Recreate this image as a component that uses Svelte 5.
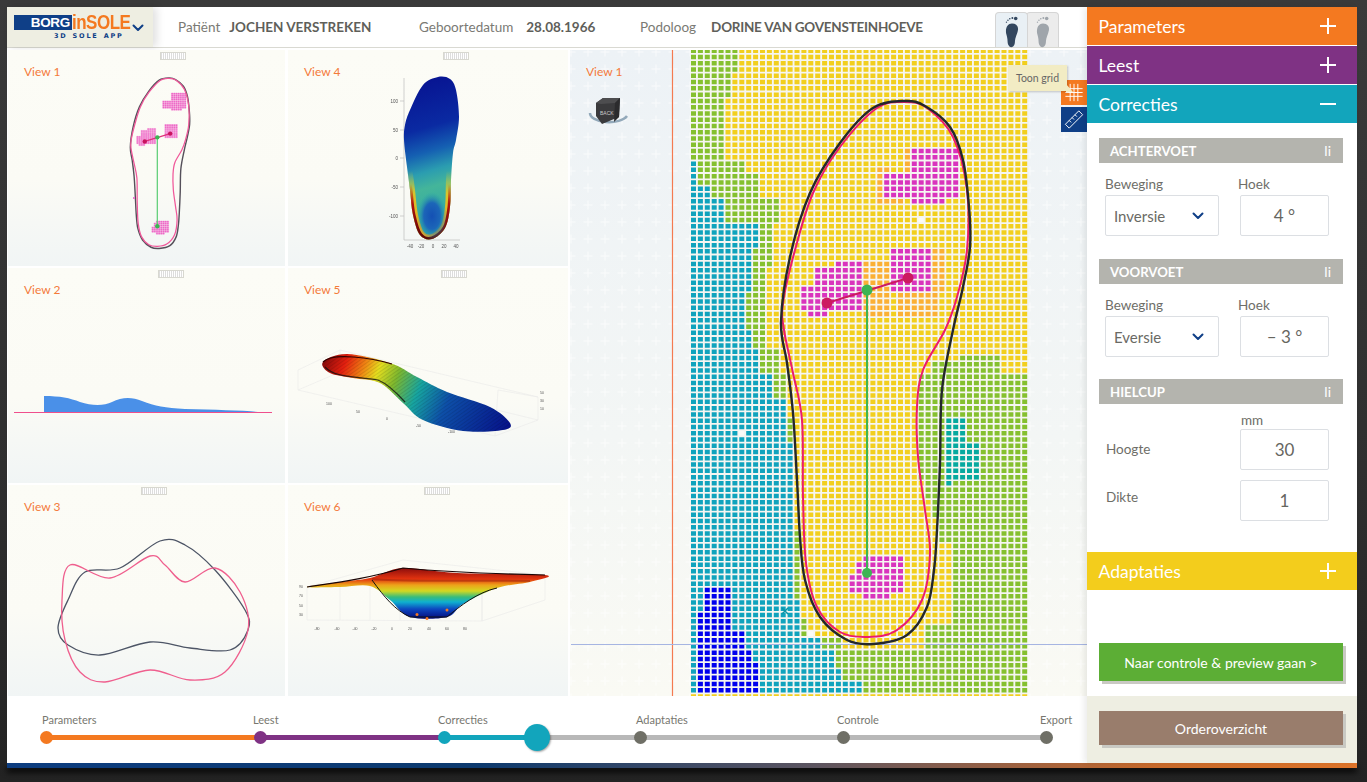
<script>
	const COLORS = {
		yellow: '#f2cf1e',
		green: '#85c02f',
		teal: '#10a3bd',
		sea: '#06a99f',
		blue: '#0000ee',
		pink: '#d934bd',
		orange: '#fbb034',
		white: '#fbfbf8'
	};

	// rectangles in page coordinates, later ones win
	const AREAS = [
		['green', 691, 50, 737, 75], ['green', 691, 75, 731, 95], ['green', 691, 95, 725, 163],
		['green', 691, 163, 745, 175], ['green', 691, 175, 758, 195], ['green', 691, 195, 778, 225],
		['green', 691, 225, 771, 270], ['green', 691, 270, 764, 350], ['green', 691, 350, 778, 375],
		['green', 691, 375, 787, 420], ['green', 691, 420, 793, 480], ['green', 691, 530, 800, 620],
		['green', 691, 620, 810, 640], ['green', 691, 640, 840, 696],
		['green', 958, 353, 998, 362], ['green', 930, 362, 998, 372], ['green', 920, 372, 1030, 480],
		['green', 925, 480, 1030, 500], ['green', 930, 500, 1030, 520], ['green', 940, 520, 1030, 540],
		['green', 950, 540, 1030, 625], ['green', 923, 625, 1030, 650], ['green', 840, 650, 1030, 696],
		['teal', 691, 163, 696, 183], ['teal', 691, 183, 711, 195], ['teal', 691, 195, 724, 220],
		['teal', 691, 220, 758, 250], ['teal', 691, 250, 752, 290], ['teal', 691, 290, 745, 330],
		['teal', 691, 330, 752, 350],
		['teal', 691, 350, 759, 375], ['teal', 691, 375, 771, 400], ['teal', 691, 400, 787, 440],
		['teal', 691, 440, 792, 600], ['teal', 691, 600, 798, 640], ['teal', 691, 640, 820, 652],
		['teal', 691, 652, 832, 670], ['teal', 691, 670, 842, 682], ['teal', 691, 682, 860, 696],
		['sea', 943, 417, 963, 445], ['sea', 943, 445, 977, 478], ['sea', 943, 478, 950, 486],
		['blue', 705, 588, 730, 610], ['blue', 698, 610, 730, 630], ['blue', 698, 630, 743, 650],
		['blue', 698, 650, 750, 665], ['blue', 698, 665, 758, 696],
		['orange', 876, 165, 890, 206], ['orange', 903, 150, 910, 170], ['orange', 876, 200, 905, 206],
		['orange', 862, 258, 890, 320], ['orange', 900, 295, 936, 320], ['orange', 930, 246, 942, 295],
		['pink', 910, 150, 958, 173], ['pink', 883, 173, 958, 195], ['pink', 910, 195, 958, 200],
		['pink', 910, 200, 943, 206],
		['pink', 890, 246, 930, 258], ['pink', 890, 258, 935, 280], ['pink', 890, 280, 930, 295],
		['pink', 835, 258, 862, 270], ['pink', 815, 270, 862, 284], ['pink', 801, 284, 868, 295],
		['pink', 801, 295, 860, 310], ['pink', 808, 310, 826, 320],
		['pink', 862, 557, 902, 563], ['pink', 855, 563, 902, 575], ['pink', 848, 575, 902, 590],
		['pink', 862, 590, 888, 600],
		['white', 917, 217, 924, 223], ['white', 739, 428, 746, 434], ['white', 808, 632, 816, 640]
	];

	function heatPaths() {
		const out = {};
		for (const key in COLORS) out[key] = '';
		for (let r = 0; r < 104; r++) {
			for (let c = 0; c < 49; c++) {
				const x = 691 + c * 6.9;
				const y = 48.5 + r * 6.27;
				let key = 'yellow';
				for (const [name, x0, y0, x1, y1] of AREAS) {
					if (x + 2.5 >= x0 && x + 2.5 < x1 && y + 2.2 >= y0 && y + 2.2 < y1) key = name;
				}
				out[key] += `M${x.toFixed(1)} ${y.toFixed(1)}h5v4.5h-5z`;
			}
		}
		return out;
	}

	const heat = heatPaths();
	const heatKeys = Object.keys(COLORS);

	// closed catmull-rom curve through points
	function smooth(pts) {
		const n = pts.length;
		let d = `M${pts[0][0]} ${pts[0][1]}`;
		for (let i = 0; i < n; i++) {
			const p0 = pts[(i - 1 + n) % n];
			const p1 = pts[i];
			const p2 = pts[(i + 1) % n];
			const p3 = pts[(i + 2) % n];
			const c1 = [p1[0] + (p2[0] - p0[0]) / 6, p1[1] + (p2[1] - p0[1]) / 6];
			const c2 = [p2[0] - (p3[0] - p1[0]) / 6, p2[1] - (p3[1] - p1[1]) / 6];
			d += `C${c1[0].toFixed(1)} ${c1[1].toFixed(1)} ${c2[0].toFixed(1)} ${c2[1].toFixed(1)} ${p2[0]} ${p2[1]}`;
		}
		return d + 'Z';
	}

	const soleBlack = smooth([
		[905, 101], [925, 106], [950, 127], [963, 160], [969, 207], [970, 247], [963, 287], [953, 330],
		[942, 390], [940, 463], [937, 530], [934, 570], [927, 607], [907, 635], [873, 644], [847, 640],
		[820, 617], [805, 580], [800, 537], [797, 480], [793, 413], [787, 363], [781, 322], [790, 257],
		[810, 193], [840, 143], [873, 108]
	]);
	const solePink = smooth([
		[905, 102], [927, 108], [953, 137], [967, 190], [967, 250], [957, 297], [945, 330], [923, 370],
		[917, 407], [918, 457], [925, 510], [930, 553], [922, 600], [897, 630], [868, 637], [840, 632],
		[817, 607], [806, 563], [803, 497], [802, 420], [793, 373], [784, 330], [783, 303], [795, 250],
		[813, 193], [840, 147], [877, 108]
	]);
	const soleTop = smooth([
		[438, 77], [450, 79], [456, 90], [459, 117], [456, 140], [453, 153], [451, 180], [450, 207],
		[445, 228], [432, 239], [420, 235], [413, 215], [410, 190], [407, 167], [404, 140], [405, 125],
		[410, 110], [423, 85]
	]);
	const side3d = smooth([
		[323, 362], [347, 354], [390, 363], [417, 377], [447, 392], [490, 407], [510, 423], [503, 430],
		[463, 431], [423, 420], [403, 403], [380, 383], [353, 378], [330, 373]
	]);
	const front3d = smooth([
		[307, 587], [340, 582], [370, 578], [403, 568], [457, 573], [545, 575], [530, 582], [497, 588],
		[463, 604], [447, 617], [410, 617], [390, 600], [370, 586], [340, 587]
	]);
	const rimDark = smooth([
		[58, 628], [68, 600], [85, 572], [120, 568], [160, 541], [185, 545], [215, 570], [245, 610],
		[248, 630], [230, 650], [190, 648], [150, 642], [100, 655], [68, 645]
	]);
	const rimPink = smooth([
		[70, 565], [110, 578], [150, 556], [165, 565], [185, 582], [215, 568], [240, 592], [248, 630],
		[225, 672], [190, 680], [150, 670], [105, 682], [80, 672], [65, 640], [62, 600]
	]);

	const accordions = { parameters: '#f47920', leest: '#7f3284', correcties: '#12a5bc', adaptaties: '#f3cd1c' };

	const steps = [
		{ label: 'Parameters', dot: '#f47920', line: '#f47920', width: 214, shift: -4 },
		{ label: 'Leest', dot: '#7f3284', line: '#7f3284', width: 184, shift: -7 },
		{ label: 'Correcties', dot: '#12a5bc', line: 'linear-gradient(90deg,#12a5bc 47%,#b8b8b8 47%)', width: 196, shift: -6 },
		{ label: 'Adaptaties', dot: '#6f6f66', line: '#b8b8b8', width: 203, shift: -4 },
		{ label: 'Controle', dot: '#6f6f66', line: '#b8b8b8', width: 203, shift: -6 },
		{ label: 'Export', dot: '#6f6f66', line: 'none', width: 0, shift: -6 }
	];

	const handles = [160, 443, 158, 441, 141, 424];
	const ticksY = [['100', 101], ['50', 130], ['0', 158], ['-50', 187], ['-100', 216]];
	const ticksX = [['-40', 410], ['-20', 421], ['0', 433], ['20', 444], ['40', 456]];
	const ticksFront = [['-80', 317], ['-60', 337], ['-40', 355], ['-20', 374], ['0', 392], ['20', 410], ['40', 429], ['60', 447], ['80', 465]];
</script>

{#snippet plus()}
	<svg class="acc-icon" viewBox="0 0 16 16"><path d="M8 0v16M0 8h16" /></svg>
{/snippet}

{#snippet chevron()}
	<svg class="chevron" viewBox="0 0 12 8"><path d="M1.5 1.5 6 6l4.500-4.500" /></svg>
{/snippet}

{#snippet foot()}
	<path d="M12 13c-6 0-9 6-8 13 1 4 2 7 2 11 0 4 2 8 5 8s5-3 5-8c0-5 3-9 4-15 1-5-2-9-8-9z" />
	<circle cx="17" cy="6" r="2.400" /><circle cx="12.500" cy="5.500" r="1.300" /><circle cx="9" cy="6.500" r="1.100" /><circle cx="6.500" cy="8.500" r="1" /><circle cx="4.500" cy="11" r=".9" />
{/snippet}

<div class="frame">
	<div class="window">
		<div class="left">
			<header class="topbar">
				<div class="logo-box">
					<div class="logo">
						<div class="logo-top"><span class="borg">BORG</span><span class="insole">inSOLE</span></div>
						<div class="logo-sub">3D SOLE APP</div>
					</div>
					{@render chevron()}
				</div>
				<div class="info first"><span>Patiënt</span><b>JOCHEN VERSTREKEN</b></div>
				<div class="info second"><span>Geboortedatum</span><b>28.08.1966</b></div>
				<div class="info third"><span>Podoloog</span><b>DORINE VAN GOVENSTEINHOEVE</b></div>
				<div class="feet">
					<div class="foot-tab active">
						<svg viewBox="0 0 24 46" class="foot-dark">{@render foot()}</svg>
					</div>
					<div class="foot-tab">
						<svg viewBox="0 0 24 46" class="foot-light">{@render foot()}</svg>
					</div>
				</div>
			</header>

			<div class="workspace">
				<div class="views">
					<div class="view">
						<span class="handle" style="left:{handles[0] - 8}px"></span>
						<span class="view-label">View 1</span>
						<svg class="art" viewBox="8 50 277 216">
							<g transform="translate(130 78) scale(.314) translate(-780 -101)">
								<path d={heat.pink} fill="#ee6cc8" stroke="#ee6cc8" stroke-width="1.200" />
								<path d={soleBlack} class="line" stroke="#55505a" stroke-width="4.500" />
								<path d={solePink} class="line" stroke="#f0589a" stroke-width="4" />
								<path d="M867 290V573" class="line" stroke="#5fcf78" stroke-width="4" />
								<path d="M827 303 908 278" class="line" stroke="#e0307a" stroke-width="4" />
								<circle cx="827" cy="303" r="7" fill="#c9145e" />
								<circle cx="908" cy="278" r="7" fill="#c9145e" />
								<circle cx="867" cy="290" r="7" fill="#3cb454" />
								<circle cx="867" cy="573" r="7" fill="#3cb454" />
							</g>
							<rect x="133" y="197" width="2" height="2" fill="#e77cd0" />
						</svg>
					</div>
					<div class="view">
						<span class="handle" style="left:{handles[1] - 288}px"></span>
						<span class="view-label">View 4</span>
						<svg class="art" viewBox="288 50 280 216">
							<defs>
								<linearGradient id="topFill" x1="0" y1="0" x2="0.1" y2="1">
									<stop offset="0" stop-color="#07108f" />
									<stop offset=".35" stop-color="#0a2aa2" />
									<stop offset=".5" stop-color="#1560b2" />
									<stop offset=".62" stop-color="#2b9db0" />
									<stop offset=".72" stop-color="#44b59a" />
									<stop offset="1" stop-color="#2aa5a8" />
								</linearGradient>
								<linearGradient id="topEdge" x1="0" y1="0" x2="0" y2="1">
									<stop offset=".58" stop-color="#e3d22a" stop-opacity="0" />
									<stop offset=".72" stop-color="#d8c52a" />
									<stop offset="1" stop-color="#e9a020" />
								</linearGradient>
								<linearGradient id="topRim" x1="0" y1="0" x2="0" y2="1">
									<stop offset=".66" stop-color="#b01010" stop-opacity="0" />
									<stop offset=".78" stop-color="#b01010" />
									<stop offset="1" stop-color="#5a0505" />
								</linearGradient>
								<radialGradient id="heelFill">
									<stop offset="0" stop-color="#1450b4" />
									<stop offset=".55" stop-color="#1c66b8" />
									<stop offset="1" stop-color="#2aa5a8" stop-opacity="0" />
								</radialGradient>
								<clipPath id="topClip"><path d={soleTop} /></clipPath>
							</defs>
							<path d="M404 78V240H460" class="axis" />
							{#each ticksY as [t, y]}
								<path d="M400 {y}h4" class="axis" />
								<text x="398" y={y + 1.500} text-anchor="end" class="tick">{t}</text>
							{/each}
							{#each ticksX as [t, x]}
								<text {x} y="248" text-anchor="middle" class="tick">{t}</text>
							{/each}
							<path d={soleTop} fill="url(#topFill)" />
							<g clip-path="url(#topClip)">
								<path d={soleTop} class="line" stroke="url(#topEdge)" stroke-width="10" />
								<path d={soleTop} class="line" stroke="url(#topRim)" stroke-width="5" />
								<ellipse cx="432" cy="216" rx="15" ry="24" fill="url(#heelFill)" />
							</g>
						</svg>
					</div>
					<div class="view">
						<span class="handle" style="left:{handles[2] - 8}px"></span>
						<span class="view-label">View 2</span>
						<svg class="art" viewBox="8 268 277 215">
							<path d="M44 412V396C60 396 70 398 80 402 92 406 104 406 112 402 122 397 132 397 142 401 155 406 165 408 185 409 215 410 240 410 258 412Z" fill="#4a90e8" />
							<path d="M14 412.500H272" class="line" stroke="#ef4f8c" stroke-width="1" />
						</svg>
					</div>
					<div class="view">
						<span class="handle" style="left:{handles[3] - 288}px"></span>
						<span class="view-label">View 5</span>
						<svg class="art" viewBox="288 268 280 215">
							<defs>
								<linearGradient id="sideFill" gradientUnits="userSpaceOnUse" x1="330" y1="350" x2="508" y2="428">
									<stop offset="0" stop-color="#8f0b0b" />
									<stop offset=".1" stop-color="#e5200f" />
									<stop offset=".2" stop-color="#f08a14" />
									<stop offset=".27" stop-color="#e6df1f" />
									<stop offset=".37" stop-color="#7fb82e" />
									<stop offset=".5" stop-color="#17a5a0" />
									<stop offset=".66" stop-color="#0d4fa8" />
									<stop offset="1" stop-color="#06128a" />
								</linearGradient>
								<pattern id="mesh" width="3" height="3" patternUnits="userSpaceOnUse" patternTransform="rotate(55)">
									<path d="M0 0V3" stroke="#000" stroke-width=".7" opacity=".3" />
								</pattern>
							</defs>
							<path d="M298 390 495 436 538 420V397L498 390M298 390V370L340 350 538 397M340 350V372L538 420M298 390 340 372M498 390 495 436" class="grid3d" />
							{#each [[326, 405, '100'], [356, 413, '50'], [386, 420, '0'], [416, 427, '-50'], [448, 433, '-100']] as [x, y, t]}
								<text {x} {y} class="tick small">{t}</text>
							{/each}
							{#each [[540, 394, '50'], [540, 402, '30'], [540, 410, '10']] as [x, y, t]}
								<text {x} {y} class="tick small">{t}</text>
							{/each}
							<path d={side3d} fill="url(#sideFill)" />
							<path d={side3d} fill="url(#mesh)" />
							<path d="M323 362C332 352 372 358 392 364" class="line" stroke="#300" stroke-width="1.200" />
							<path d="M325 367C335 378 355 376 378 380 388 384 396 392 405 402" class="line" stroke="#111" stroke-width="1.200" opacity=".8" />
						</svg>
					</div>
					<div class="view">
						<span class="handle" style="left:{handles[4] - 8}px"></span>
						<span class="view-label">View 3</span>
						<svg class="art" viewBox="8 485 277 211">
							<path d={rimDark} class="line" stroke="#4d5566" stroke-width="1.300" />
							<path d={rimPink} class="line" stroke="#ef5f8e" stroke-width="1.300" />
						</svg>
					</div>
					<div class="view">
						<span class="handle" style="left:{handles[5] - 288}px"></span>
						<span class="view-label">View 6</span>
						<svg class="art" viewBox="288 485 280 211">
							<defs>
								<linearGradient id="frontFill" gradientUnits="userSpaceOnUse" x1="0" y1="568" x2="0" y2="618">
									<stop offset="0" stop-color="#8c0d0d" />
									<stop offset=".22" stop-color="#e3330f" />
									<stop offset=".34" stop-color="#eda31a" />
									<stop offset=".46" stop-color="#d3d821" />
									<stop offset=".58" stop-color="#38bc7c" />
									<stop offset=".68" stop-color="#0fb0cf" />
									<stop offset=".82" stop-color="#0d48c0" />
									<stop offset="1" stop-color="#050f80" />
								</linearGradient>
							</defs>
							<path d="M307 587V620L482 621 545 600V575L403 560 307 587M482 621V590M340 580V620M370 578V620M400 570V620M440 570V620M482 574 482 621" class="grid3d" />
							{#each ticksFront as [t, x]}
								<text {x} y="630" text-anchor="middle" class="tick small">{t}</text>
							{/each}
							{#each [['90', 588], ['70', 597], ['50', 607], ['30', 616]] as [t, y]}
								<text x="303" {y} text-anchor="end" class="tick small">{t}</text>
							{/each}
							<path d={front3d} fill="url(#frontFill)" />
							<path d="M307 587C340 582 370 578 403 568 457 573 500 574 545 575" class="line" stroke="#1a0505" stroke-width="1.200" />
							<path d="M372 579C395 582 450 580 530 581" class="line" stroke="#7a1208" stroke-width="2" opacity=".35" />
							<path d="M372 580C385 598 395 610 410 617H447C460 606 478 592 497 588" class="line" stroke="#111" stroke-width="1" />
							<circle cx="417" cy="614.500" r="1.500" fill="#f47920" />
							<circle cx="447" cy="610" r="1.500" fill="#f47920" />
							<circle cx="427" cy="618.500" r="1.500" fill="#f47920" />
						</svg>
					</div>
				</div>

				<div class="main-view">
					<svg class="art" viewBox="570 50 517 646">
						<defs>
							<pattern id="plusses" x="579.500" y="60.500" width="17" height="17" patternUnits="userSpaceOnUse">
								<path d="M8.500 4v9M4 8.500h9" stroke="#fff" stroke-width="1" opacity=".65" />
							</pattern>
							<linearGradient id="mainBg" x1="0" y1="0" x2="0" y2="1">
								<stop offset="0" stop-color="#edf2f6" />
								<stop offset=".6" stop-color="#f3f6f5" />
								<stop offset="1" stop-color="#fafaf4" />
							</linearGradient>
						</defs>
						<rect x="570" y="50" width="517" height="646" fill="url(#mainBg)" />
						<rect x="570" y="50" width="517" height="646" fill="url(#plusses)" />
						<rect x="690" y="50" width="337" height="646" fill="#f6f6f2" />
						<path d="M672.500 50V696" class="line" stroke="#f47a50" stroke-width="1.200" />
						{#each heatKeys as key}
							<path d={heat[key]} fill={COLORS[key]} />
						{/each}
						<path d="M782 608l6 6M788 608l-6 6" class="line" stroke="#0b93a8" stroke-width="1.500" />
						<path d="M571 644.500H1087" class="line" stroke="#a6b5e2" stroke-width="1" />
						<path d={solePink} class="line" stroke="#ec1b6d" stroke-width="2" />
						<path d={soleBlack} class="line" stroke="#23272c" stroke-width="2.400" />
						<path d="M867 290V573" class="line" stroke="#3cb454" stroke-width="2" />
						<path d="M827 303 908 278" class="line" stroke="#cc1a60" stroke-width="2" />
						<circle cx="827" cy="303" r="5.500" fill="#cc1a60" />
						<circle cx="908" cy="278" r="5.500" fill="#cc1a60" />
						<circle cx="867" cy="290" r="5.500" fill="#3cb454" />
						<circle cx="867" cy="573" r="5" fill="#3cb454" />
						<!-- view cube -->
						<path d="M590 113A19 9 0 0 0 627 116" fill="none" stroke="#93a9ba" stroke-width="2.500" />
						<path d="M596 103 603 98 620 98 619 117 602 124 596 116Z" fill="#3a3a3c" />
						<path d="M596 103 603 98 620 98 615 103 601 104Z" fill="#4d4d4f" />
						<path d="M615 103 620 98 619 117 614 122Z" fill="#2b2b2d" />
						<text x="600" y="115" class="cube">BACK</text>
					</svg>
					<span class="view-label main-label">View 1</span>
					<div class="tooltip">Toon grid</div>
					<div class="tools">
						<button class="tool grid-tool" aria-label="Toon grid">
							<svg viewBox="0 0 24 24"><path d="M8 3v18M12 3v18M16 3v18M3 8h18M3 12h18M3 16h18" /></svg>
						</button>
						<button class="tool ruler-tool" aria-label="Meten">
							<svg viewBox="0 0 24 24"><path d="M3 17 17 3l4 4L7 21ZM7 13l2 2M10 10l2 2M13 7l2 2" /></svg>
						</button>
					</div>
				</div>
			</div>

			<div class="stepper">
				{#each steps as step}
					<div class="step" style="width:{step.width}px">
						<span class="step-label" style="margin-left:{step.shift}px">{step.label}</span>
						<span class="step-line" style="background:{step.line}"></span>
						<span class="step-dot" style="background:{step.dot}"></span>
					</div>
				{/each}
				<span class="thumb"></span>
			</div>
		</div>

		<aside class="sidebar">
			<div class="acc" style="background:{accordions.parameters}">Parameters {@render plus()}</div>
			<div class="acc" style="background:{accordions.leest}">Leest {@render plus()}</div>
			<div class="acc" style="background:{accordions.correcties}">
				Correcties
				<svg class="acc-icon" viewBox="0 0 16 16"><path d="M0 8h16" /></svg>
			</div>

			<div class="panel">
				<div class="section-head"><span>ACHTERVOET</span><span class="li">li</span></div>
				<div class="fields">
					<div class="field">
						<span class="field-label">Beweging</span>
						<div class="select">Inversie {@render chevron()}</div>
					</div>
					<div class="field angle">
						<span class="field-label">Hoek</span>
						<div class="number">4 °</div>
					</div>
				</div>

				<div class="section-head"><span>VOORVOET</span><span class="li">li</span></div>
				<div class="fields tight">
					<div class="field">
						<span class="field-label">Beweging</span>
						<div class="select">Eversie {@render chevron()}</div>
					</div>
					<div class="field angle">
						<span class="field-label">Hoek</span>
						<div class="number">– 3 °</div>
					</div>
				</div>

				<div class="section-head"><span>HIELCUP</span><span class="li">li</span></div>
				<div class="unit">mm</div>
				<div class="row">
					<span class="row-label">Hoogte</span>
					<div class="number">30</div>
				</div>
				<div class="row second-row">
					<span class="row-label">Dikte</span>
					<div class="number">1</div>
				</div>
			</div>

			<div class="acc" style="background:{accordions.adaptaties}">Adaptaties {@render plus()}</div>

			<div class="actions">
				<button class="btn green">Naar controle &amp; preview gaan &gt;</button>
			</div>
			<div class="foot-actions">
				<button class="btn brown">Orderoverzicht</button>
			</div>
		</aside>
	</div>
	<div class="strip"></div>
</div>

<style>
	:global(body) {
		margin: 0;
		background: #333;
	}

	.frame {
		width: 1367px;
		height: 782px;
		padding: 7px 0 0 7px;
		box-sizing: border-box;
		overflow: hidden;
		background: linear-gradient(180deg, #3a3a3a 0, #2f2f2f 60%, #232323 100%);
		font-family: Lato, 'Open Sans', sans-serif;
		color: #666;
	}

	.window {
		display: flex;
		width: 1350px;
		height: 756px;
		background: #fff;
	}

	.strip {
		width: 1350px;
		height: 5px;
		background: linear-gradient(90deg, #0d3d80 0, #0d3a6e 35%, #5d5560 60%, #c96a2b 85%, #e0752a 100%);
		box-shadow: 0 4px 6px #000;
	}

	.left {
		display: flex;
		flex-direction: column;
		width: 1080px;
	}

	/* Header */
	.topbar {
		display: flex;
		align-items: center;
		height: 41px;
		flex: none;
		box-sizing: border-box;
		border-bottom: 1px solid #d9d9d2;
		background: #fff;
	}

	.logo-box {
		display: flex;
		align-items: center;
		width: 146px;
		height: 100%;
		box-sizing: border-box;
		padding: 1px 0 0 7px;
		background: #eeeee2;
		box-shadow: 4px 0 8px rgba(0, 0, 0, 0.12);
	}

	.logo {
		width: 120px;
		flex: none;
	}

	.logo-top {
		display: flex;
		align-items: center;
		height: 15px;
	}

	.borg {
		width: 58px;
		flex: none;
		box-sizing: border-box;
		padding-right: 2px;
		background: #0f3f87;
		color: #fff;
		font: 700 13.5px/15px 'Liberation Sans', sans-serif;
		text-align: right;
		letter-spacing: -0.3px;
	}

	.insole {
		display: inline-block;
		color: #f47920;
		font: 700 20px/15px 'Liberation Sans', sans-serif;
		letter-spacing: -0.6px;
		transform: scale(0.85, 1.05);
		transform-origin: left center;
	}

	.logo-sub {
		margin-top: 2px;
		padding-left: 40px;
		color: #0f3f87;
		font: 700 6.5px/8px 'DejaVu Sans', sans-serif;
		letter-spacing: 1.8px;
		word-spacing: 1px;
		white-space: nowrap;
	}

	.chevron {
		width: 12px;
		height: 8px;
		flex: none;
		fill: none;
		stroke: #0f3f87;
		stroke-width: 2;
		stroke-linecap: round;
		stroke-linejoin: round;
	}

	.logo-box .chevron {
		margin-left: -2px;
	}

	.info {
		display: flex;
		font-size: 13.5px;
		color: #7a7a74;
		white-space: nowrap;
	}

	.info b {
		color: #5f5f5a;
		font-weight: 700;
	}

	.first {
		gap: 9px;
		margin-left: 25px;
		width: 241px;
	}

	.second {
		gap: 13px;
		width: 221px;
	}

	.third {
		gap: 15px;
		width: 355px;
	}

	.third b {
		letter-spacing: -0.25px;
	}

	.feet {
		display: flex;
		align-self: flex-end;
	}

	.foot-tab {
		width: 33px;
		height: 35px;
		box-sizing: border-box;
		padding-top: 1px;
		border: 1px solid #d5d5d5;
		border-bottom: 0;
		border-radius: 4px 4px 0 0;
		background: #ececec;
		text-align: center;
	}

	.foot-tab.active {
		background: #e9f0f5;
		margin-right: -2px;
		position: relative;
	}

	.foot-tab svg {
		width: 22px;
		height: 34px;
	}

	.foot-dark {
		fill: #33475f;
	}

	.foot-light {
		fill: #9fa5ab;
	}

	/* Views */
	.workspace {
		display: flex;
		flex: none;
		height: 648px;
		padding: 2px 0 0 1px;
		box-sizing: border-box;
		gap: 2px;
	}

	.views {
		display: grid;
		grid-template-columns: 277px 280px;
		grid-template-rows: 216px 215px 211px;
		column-gap: 3px;
		row-gap: 2px;
		height: 646px;
		align-content: start;
	}

	.view {
		position: relative;
		overflow: hidden;
		background: linear-gradient(180deg, #fcfcf6 0, #fbfbf5 60%, #f1f5f5 100%);
	}

	.view .art {
		filter: blur(0.35px);
	}

	.view-label {
		position: absolute;
		left: 16px;
		top: 15px;
		font-size: 12px;
		line-height: 14px;
		color: #f47a3a;
	}

	.handle {
		position: absolute;
		top: 2px;
		width: 24px;
		height: 6px;
		border: 1px solid #d8d8d0;
		background: repeating-linear-gradient(90deg, #ddd 0 1px, #fff 1px 2px);
		z-index: 1;
	}

	.art {
		position: absolute;
		left: 0;
		top: 0;
		width: 100%;
		height: 100%;
	}

	.line {
		fill: none;
	}

	.axis {
		fill: none;
		stroke: #bdbdbd;
		stroke-width: 0.7;
	}

	.grid3d {
		fill: none;
		stroke: #e6e6e6;
		stroke-width: 0.5;
	}

	.tick {
		font-family: 'Liberation Sans', sans-serif;
		font-size: 4.5px;
		fill: #555;
	}

	.tick.small {
		font-size: 3.5px;
	}

	.cube {
		font-family: 'Liberation Sans', sans-serif;
		font-size: 5px;
		fill: #ccc;
	}

	.main-view {
		position: relative;
		width: 517px;
		height: 646px;
		overflow: visible;
	}

	.main-label {
		top: 15px;
	}

	.tooltip {
		position: absolute;
		left: 438px;
		top: 15px;
		width: 59px;
		height: 26px;
		background: #f2ecc4;
		box-shadow: 1px 1px 2px rgba(0, 0, 0, 0.2);
		font-size: 10.5px;
		line-height: 26px;
		text-align: center;
		color: #666;
		z-index: 2;
	}

	.tooltip::after {
		content: '';
		position: absolute;
		right: -6px;
		bottom: -1px;
		border-left: 7px solid #f2ecc4;
		border-top: 8px solid transparent;
		transform: rotate(0deg);
	}

	.tools {
		position: absolute;
		right: 0;
		top: 30px;
		display: flex;
		flex-direction: column;
		gap: 2px;
	}

	.tool {
		display: block;
		width: 26px;
		height: 25px;
		padding: 1px;
		border: 0;
	}

	.tool svg {
		display: block;
		width: 24px;
		height: 23px;
		fill: none;
		stroke: #fff;
		stroke-width: 1;
	}

	.grid-tool {
		background: #f47920;
	}

	.ruler-tool {
		background: #0f3f87;
	}

	/* Stepper */
	.stepper {
		position: relative;
		display: flex;
		flex: 1;
		padding-left: 39px;
		background: #fff;
	}

	.step {
		position: relative;
		flex: none;
	}

	.step-label {
		position: absolute;
		left: 0;
		top: 17px;
		font-size: 11px;
		line-height: 14px;
		color: #77776f;
		white-space: nowrap;
	}

	.step-line {
		position: absolute;
		left: 0;
		top: 39px;
		width: 100%;
		height: 5px;
	}

	.step-dot {
		position: absolute;
		left: -6px;
		top: 35px;
		width: 13px;
		height: 13px;
		border-radius: 50%;
	}

	.thumb {
		position: absolute;
		left: 517px;
		top: 28px;
		width: 26px;
		height: 27px;
		border-radius: 50%;
		background: #12a5bc;
		box-shadow: 1px 1px 2px rgba(0, 0, 0, 0.35);
	}

	/* Sidebar */
	.sidebar {
		display: flex;
		flex-direction: column;
		width: 270px;
		background: #fff;
		box-shadow: -3px 0 6px rgba(0, 0, 0, 0.08);
		position: relative;
	}

	.acc {
		display: flex;
		align-items: center;
		justify-content: space-between;
		flex: none;
		height: 38px;
		margin-bottom: 1px;
		padding: 0 21px 0 11.500px;
		font-size: 17.500px;
		color: #fff;
	}

	.acc-icon {
		width: 16px;
		height: 16px;
		fill: none;
		stroke: #fff;
		stroke-width: 2;
	}

	.panel {
		height: 428px;
		box-sizing: border-box;
		padding: 14px 14px 0 12px;
		flex: none;
	}

	.section-head {
		display: flex;
		justify-content: space-between;
		align-items: center;
		height: 25px;
		padding: 0 12px 0 11px;
		background: #b4b4ae;
		color: #fff;
		font-size: 13.200px;
		font-weight: 700;
	}

	.li {
		font-weight: 400;
		font-size: 14px;
	}

	.fields {
		display: flex;
		height: 96px;
		padding-left: 6px;
		padding-top: 13px;
		box-sizing: border-box;
	}

	.fields.tight {
		height: 95px;
	}

	.field {
		display: flex;
		flex-direction: column;
		flex: none;
		width: 135px;
	}

	.field.angle {
		width: 89px;
	}

	.angle .field-label {
		margin-left: -2px;
	}

	.field-label,
	.row-label,
	.unit {
		font-size: 13.500px;
		line-height: 16px;
		color: #6e6e68;
	}

	.select {
		display: flex;
		align-items: center;
		justify-content: space-between;
		width: 114px;
		height: 41px;
		box-sizing: border-box;
		padding: 0 14px 0 8px;
		margin-top: 3px;
		border: 1px solid #dcdfe3;
		border-radius: 2px;
		font-size: 15px;
		color: #6a6a64;
	}

	.number {
		width: 89px;
		height: 41px;
		box-sizing: border-box;
		margin-top: 3px;
		border: 1px solid #dcdfe3;
		border-radius: 2px;
		font-size: 17px;
		line-height: 39px;
		text-align: center;
		color: #66665f;
	}

	.unit {
		margin: 8px 0 0 142px;
	}

	.row {
		display: flex;
		align-items: center;
		justify-content: space-between;
		padding: 0 14px 0 7px;
		height: 44px;
		margin-top: -1px;
	}

	.second-row {
		margin-top: 7px;
	}

	.second-row .row-label {
		margin-bottom: 6px;
	}

	.row .number {
		margin: 0;
		flex: none;
	}

	.actions {
		flex: 1;
		padding: 52px 0 0 12px;
		box-sizing: border-box;
	}

	.foot-actions {
		flex: none;
		height: 67px;
		box-sizing: border-box;
		padding: 15px 0 0 12px;
		background: #eeeee2;
	}

	.btn {
		display: block;
		width: 244px;
		border: 0;
		color: #fff;
		font-family: inherit;
		font-size: 14px;
		text-align: center;
		box-shadow: 3px 3px 0 #c9c9c3;
	}

	.green {
		height: 38px;
		background: #5cae35;
	}

	.brown {
		height: 34px;
		background: #997d6c;
	}
</style>
